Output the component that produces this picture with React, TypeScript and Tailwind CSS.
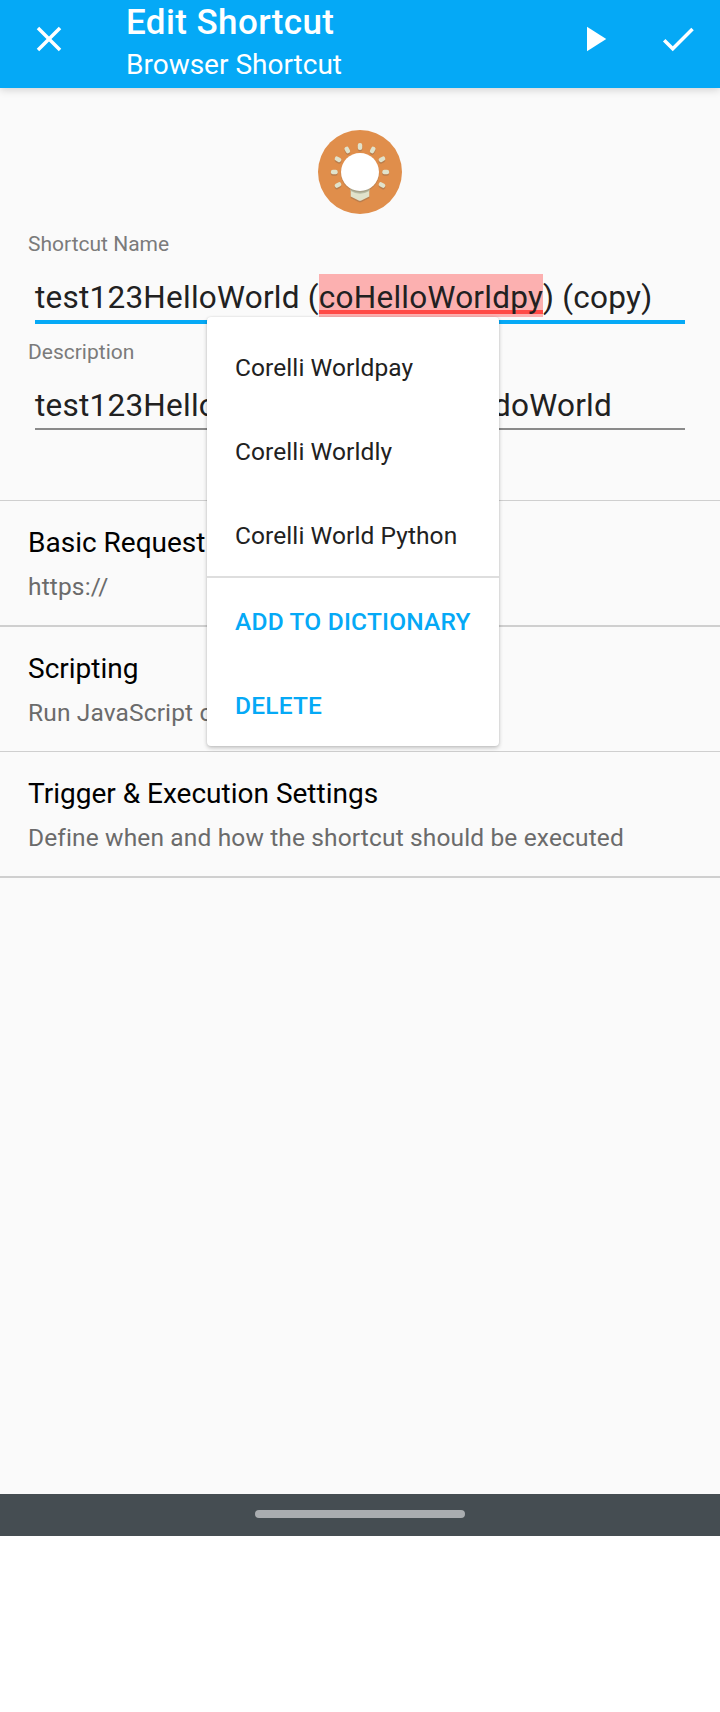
import React from "react";

const rays: [number, number, number][] = [
  [42, 16.5, 0],
  [29.3, 20, -28],
  [54.7, 20, 28],
  [20, 29.3, -62],
  [64, 29.3, 62],
  [16.3, 42, 90],
  [67.7, 42, 90],
  [20, 55, 62],
  [64, 55, -62],
];

function BulbIcon() {
  return (
    <svg width="84" height="84" viewBox="0 0 84 84">
      <circle cx="42" cy="42" r="42" fill="#e08e4b" />
      <g fill="#b07a4e" opacity="0.8">
        {rays.map(([x, y, a]) => (
          <rect key={`${x}-${y}`} x={x - 2.2} y={y - 3.3} width="4.4" height="6.8" rx="2" transform={`translate(0 1.5) rotate(${a} ${x} ${y})`} />
        ))}
        <path d="M32.700 60v8l8 3.900q1.300.6 2.600 0l8-3.900v-8z" />
      </g>
      <g fill="#e0e2cb">
        {rays.map(([x, y, a]) => (
          <rect key={`${x}-${y}`} x={x - 2.2} y={y - 3.4} width="4.4" height="6.8" rx="2" transform={`rotate(${a} ${x} ${y})`} />
        ))}
      </g>
      <path d="M32.700 56v10.500l8 3.900q1.300.6 2.600 0l8-3.900V56z" fill="#e0e2cb" />
      <path d="M32.700 56v5q9.300 5.500 18.600 0V56z" fill="#b9bda5" />
      <circle cx="42" cy="43.200" r="19.300" fill="#8a7458" opacity="0.35" />
      <circle cx="42" cy="42" r="19" fill="#fff" />
    </svg>
  );
}

function Row({ title, detail, className }: { title: string; detail: string; className: string }) {
  return (
    <div className={`px-7 pt-[26px] border-[#cfcfcf] ${className}`}>
      <div className="text-[28px] leading-8 text-black">{title}</div>
      <div className="mt-3 text-[24.5px] leading-8 tracking-[0.14px] text-[#6b6b6b]">{detail}</div>
    </div>
  );
}

export default function App() {
  return (
    <div className="relative h-[1712px] w-[720px] overflow-hidden bg-white font-['Roboto',sans-serif] whitespace-nowrap">
      <div className="flex h-[1536px] flex-col bg-[#fafafa]">
        <header className="z-10 flex h-[88px] shrink-0 bg-[#05a9f6] pr-[21px] pl-7 text-white shadow-[0_2px_8px_rgba(0,0,0,0.16)]">
          <svg className="mt-[18px]" width="42" height="42" viewBox="0 0 24 24" fill="currentColor">
            <path d="M19 6.410 17.590 5 12 10.590 6.410 5 5 6.410 10.590 12 5 17.590 6.410 19 12 13.410 17.590 19 19 17.590 13.410 12z" />
          </svg>
          <div className="ml-14 flex-1">
            <div className="mt-0.5 text-[35px] leading-[42px] font-medium tracking-[0.4px]">Edit Shortcut</div>
            <div className="mt-[5px] text-[28px] leading-8">Browser Shortcut</div>
          </div>
          <svg className="mt-[18px] mr-[42px]" width="42" height="42" viewBox="0 0 24 24" fill="currentColor">
            <path d="M8 5v14l11-7z" />
          </svg>
          <svg className="mt-[18px]" width="42" height="42" viewBox="0 0 24 24" fill="currentColor">
            <path d="M9 16.170 4.830 12l-1.420 1.410L9 19 21 7l-1.410-1.410z" />
          </svg>
        </header>

        <main className="flex-1">
          <div className="flex justify-center pt-[42px]">
            <BulbIcon />
          </div>
          <section className="h-[286px] px-7 pt-[18px]">
            <div className="text-[21px] leading-6 text-[#7b7b7b]">Shortcut Name</div>
            <div className="mx-[7px] mt-[18px] flex h-[50px] border-b-4 border-[#05a9f6] text-[31.500px] leading-[48px] tracking-[0.24px] text-[#212121]">
              <span>test123HelloWorld (</span>
              <span className="flex h-[43px] bg-[linear-gradient(to_bottom,transparent_36px,#ff4a46_36px,#ff4a46_40px,transparent_40px)] bg-[#fcb0b0]">coHelloWorldpy</span>
              <span>) (copy)</span>
            </div>
            <div className="mt-4 text-[21px] leading-6 text-[#7b7b7b]">Description</div>
            <div className="mx-[7px] mt-[18px] flex h-[48px] justify-between border-b-2 border-[#8a8a8a] pr-[73px] text-[31.500px] leading-[48px] tracking-[0.24px] text-[#212121]">
              <span>test123Hello</span>
              <span>doWorld</span>
            </div>
          </section>
          <Row title="Basic Request" detail="https://" className="h-[125px] border-t" />
          <Row title="Scripting" detail="Run JavaScript c" className="h-[126px] border-t-2" />
          <Row title="Trigger & Execution Settings" detail="Define when and how the shortcut should be executed" className="h-[127px] border-t border-b-2" />
        </main>

        <footer className="flex h-[42px] shrink-0 justify-center bg-[#454d52] pt-4">
          <div className="h-2 w-[210px] rounded-full bg-[#a9adb0]" />
        </footer>
      </div>

      <div className="absolute top-[317px] left-[207px] z-20 h-[429px] w-[292px] rounded-[4px] bg-white pt-2 shadow-[0_2px_4px_rgba(0,0,0,0.22),0_0_2px_rgba(0,0,0,0.12)]">
        {["Corelli Worldpay", "Corelli Worldly", "Corelli World Python"].map((s) => (
          <div key={s} className="h-[84px] pl-7 text-[24.500px] leading-[86px] tracking-[0.08px] text-[#212121]">
            {s}
          </div>
        ))}
        <div className="-mt-px h-0.5 bg-[#dedede]" />
        {["ADD TO DICTIONARY", "DELETE"].map((s) => (
          <div key={s} className="h-[84px] pl-7 text-[24.500px] leading-[88px] font-medium tracking-[0.2px] text-[#05a9f6]">
            {s}
          </div>
        ))}
      </div>
    </div>
  );
}
